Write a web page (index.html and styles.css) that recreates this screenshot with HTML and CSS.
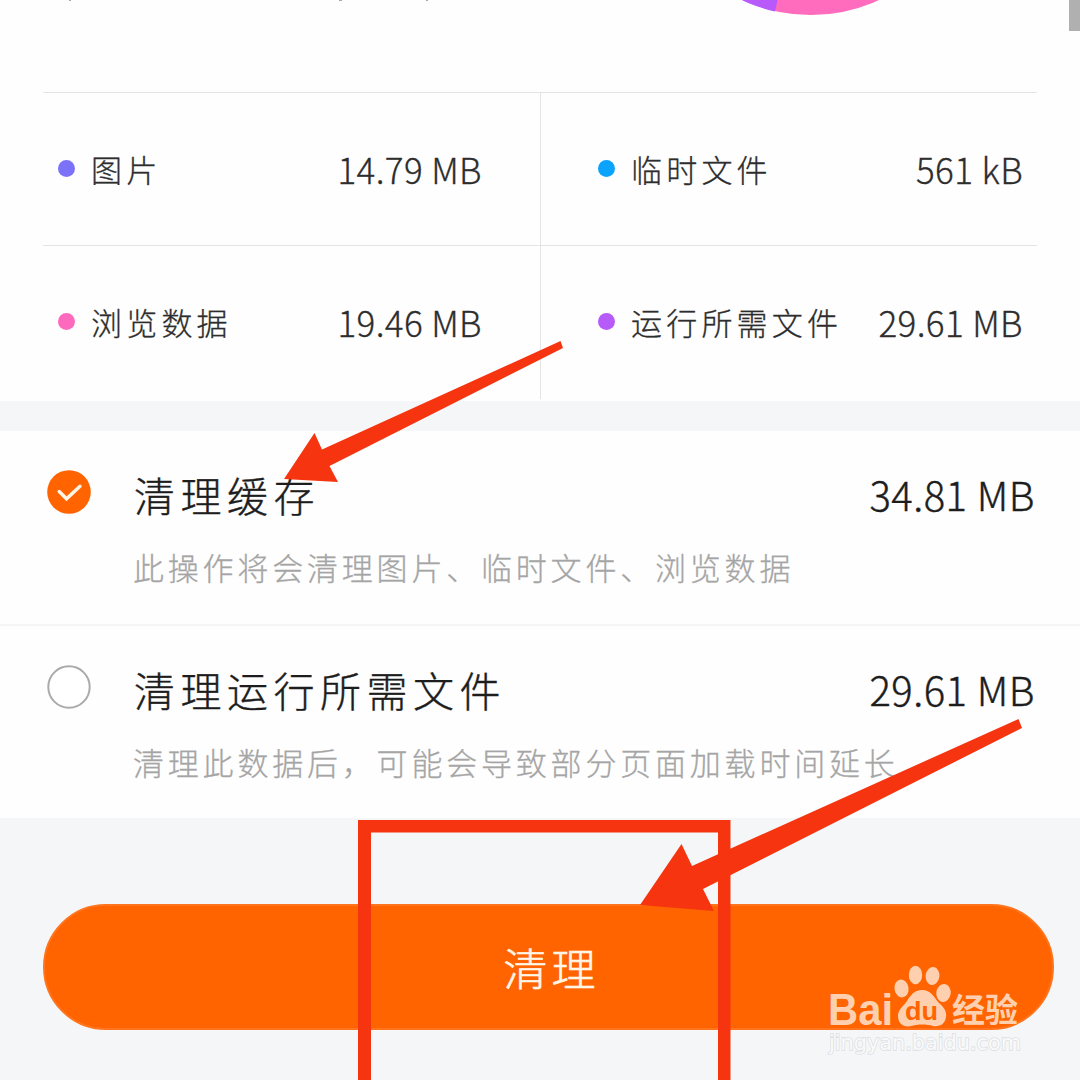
FILE: index.html
```html
<!DOCTYPE html>
<html lang="zh-CN">
<head>
<meta charset="utf-8">
<title>清理缓存</title>
<link rel="stylesheet" href="styles.css">
</head>
<body>
<main class="screen">
  <section class="summary">
    <svg class="chart" viewBox="0 0 1080 92" aria-hidden="true">
      <circle cx="811" cy="-147" r="162" fill="#ff6bbd"/>
      <path d="M811-147L775 11.500A162 162 0 0 1 649-147Z" fill="#b759fb"/>
      <path d="M69 0h2v1h-2zM339 0h3v1h-3zM426 0h2v1h-2z" fill="#aaa"/>
      <path d="M1069 0h11v31h-11z" fill="#b0b0b0"/>
    </svg>
    <div class="grid">
      <div class="cell"><i class="dot violet"></i><span class="name">图片</span><span class="size">14.79 MB</span></div>
      <div class="cell right"><i class="dot blue"></i><span class="name">临时文件</span><span class="size">561 kB</span></div>
      <div class="cell"><i class="dot pink"></i><span class="name">浏览数据</span><span class="size">19.46 MB</span></div>
      <div class="cell right"><i class="dot purple"></i><span class="name">运行所需文件</span><span class="size">29.61 MB</span></div>
    </div>
  </section>
  <section class="options">
    <div class="option">
      <svg class="radio" viewBox="0 0 44 44"><circle cx="22" cy="22" r="21.800" fill="#ff6400"/><path d="M12.200 21.500l7.300 7.300L33 16.200" fill="none" stroke="#fff4e8" stroke-width="3.400" stroke-linecap="round"/></svg>
      <div class="info">
        <div class="line"><span class="title">清理缓存</span><span class="total">34.81 MB</span></div>
        <p class="desc">此操作将会清理图片、临时文件、浏览数据</p>
      </div>
    </div>
    <div class="option">
      <svg class="radio" viewBox="0 0 44 44"><circle cx="22" cy="22" r="20.700" fill="#fff" stroke="#aaa" stroke-width="2"/></svg>
      <div class="info">
        <div class="line"><span class="title">清理运行所需文件</span><span class="total">29.61 MB</span></div>
        <p class="desc">清理此数据后，可能会导致部分页面加载时间延长</p>
      </div>
    </div>
  </section>
  <footer class="actions"><button class="clean">清理</button></footer>
  <svg class="marks" viewBox="0 0 1080 1080" aria-hidden="true">
    <g fill="#f63410">
      <path d="M284 479L314.500 433L322 449.500L560.500 341L563 348L329.500 466L338 482Z"/>
      <path d="M640 905L681.500 844L692 866L1018.500 719L1022 728L703 889L714 911Z"/>
      <path d="M358 820H730.500V1080H718V832.500H371V1080H358Z"/>
    </g>
    <g class="watermark">
      <text class="bai" x="828" y="1025" textLength="65" lengthAdjust="spacingAndGlyphs">Bai</text>
      <ellipse cx="901.500" cy="988.500" rx="7" ry="9" transform="rotate(-10 901.500 988.500)"/>
      <ellipse cx="915.500" cy="975" rx="6.700" ry="9.200"/>
      <ellipse cx="932.500" cy="976" rx="6.900" ry="9" transform="rotate(8 932.500 976)"/>
      <ellipse cx="943.500" cy="993" rx="7.200" ry="9" transform="rotate(8 943.500 993)"/>
      <path d="M922 990C931 990 934 997 938 1002C943 1007 947 1010 946 1017C945 1024 940 1027 933 1026C927 1024 917 1024 912 1026C903 1028 898 1023 898 1016C898 1009 904 1006 907 1001C911 995 914 990 922 990Z"/>
      <text class="du" x="905" y="1020" textLength="33" lengthAdjust="spacingAndGlyphs">du</text>
      <text class="jy" x="952" y="1022" textLength="66" lengthAdjust="spacingAndGlyphs">经验</text>
      <text class="url" x="829" y="1050" textLength="192" lengthAdjust="spacingAndGlyphs">jingyan.baidu.com</text>
    </g>
  </svg>
</main>
</body>
</html>
```
FILE: styles.css
```css
* { box-sizing: border-box; }
body { margin: 0; overflow: hidden; font-family: "Noto Sans CJK SC", sans-serif; font-weight: 300; color: #2d2d2d; }
.screen { position: relative; width: 1080px; height: 1080px; display: flex; flex-direction: column; background: #f5f6f8; overflow: hidden; }
.summary { height: 401px; background: #fefefe; }
.chart { display: block; width: 1080px; height: 92px; }
.grid { display: grid; grid-template-columns: 498px 496px; grid-template-rows: 153px 154px; margin-left: 43px; }
.cell { display: flex; align-items: center; border-top: 1px solid #e4e4e4; border-right: 1px solid #e4e4e4; padding: 0 59px 2px 15px; white-space: nowrap; }
.cell.right { border-right: 0; padding: 0 15px 2px 57px; }
.dot { width: 17px; height: 17px; border-radius: 50%; flex: none; }
.violet { background: #7b72f8; }
.blue { background: #0ca3fc; }
.pink { background: #fd69bd; }
.purple { background: #b65af8; }
.name { margin-left: 16px; font-size: 31px; letter-spacing: 4.2px; -webkit-text-stroke: 0.3px; }
.size { margin-left: auto; margin-right: -1px; font-size: 35px; letter-spacing: 0.4px; -webkit-text-stroke: 0.3px; }
.options { margin-top: 30px; background: #fefefe; }
.option { height: 194px; display: flex; padding: 39px 45px 0 47px; }
.option + .option { height: 193px; border-top: 2px solid #f5f5f6; margin-top: -1px; height: 194px; padding-top: 39px; }
.radio { width: 44px; height: 44px; flex: none; }
.info { flex: 1; margin-left: 43px; }
.line { display: flex; align-items: center; height: 48px; color: #1d1d1d; -webkit-text-stroke: 0.4px; }
.title { font-size: 41px; letter-spacing: 5.5px; }
.total { margin-left: auto; font-size: 40px; letter-spacing: 0.5px; }
.desc { margin: 26px 0 0 -1px; height: 46px; line-height: 46px; font-size: 31px; letter-spacing: 3.8px; color: #a5a5a5; white-space: nowrap; -webkit-text-stroke: 0.3px; }
.actions { padding: 86px 26px 0 43px; }
.clean { display: block; width: 1011px; height: 126px; border: 2px solid #ff741c; border-radius: 63px; padding: 0 0 0 6px; background: #ff6400; color: #fff6e8; font: 300 44px "Noto Sans CJK SC", sans-serif; letter-spacing: 4px; -webkit-text-stroke: 0.6px; }
.marks { position: absolute; left: 0; top: 0; width: 1080px; height: 1080px; }
.watermark { fill: #ffd0b0; }
.bai { font: bold 44px "Liberation Sans", sans-serif; }
.du { font: bold 25px "Liberation Sans", sans-serif; fill: #ff6400; }
.jy { font: bold 33px "Noto Sans CJK SC", sans-serif; }
.url { font: 21px "DejaVu Sans", sans-serif; fill: #f9fafb; stroke: #dcdee1; stroke-width: 1.5px; paint-order: stroke; }
```
